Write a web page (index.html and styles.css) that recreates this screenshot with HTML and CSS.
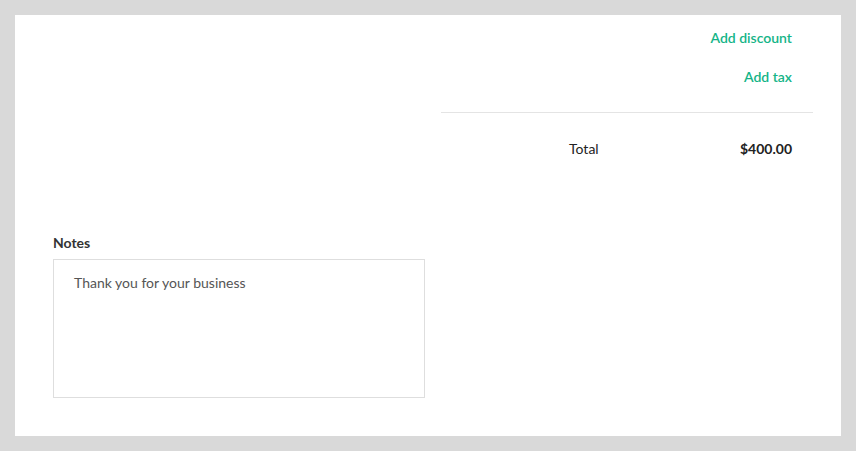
FILE: index.html
```html
<!DOCTYPE html>
<html>
<head>
<meta charset="utf-8">
<link rel="stylesheet" href="styles.css">
</head>
<body>
<div class="card">
  <div class="summary-row">
    <div class="summary">
      <a class="link first" href="#">Add discount</a>
      <a class="link second" href="#">Add tax</a>
      <div class="divider"></div>
      <div class="total-row">
        <span class="total-label">Total</span>
        <span class="total-value">$400.00</span>
      </div>
    </div>
  </div>
  <div class="notes">
    <label class="notes-label" for="notes">Notes</label>
    <textarea id="notes" class="notes-box">Thank you for your business</textarea>
  </div>
</div>
</body>
</html>
```
FILE: styles.css
```css
html, body {
  margin: 0;
  padding: 0;
}
body {
  background: #d9d9d9;
  font-family: "Lato", "Liberation Sans", sans-serif;
  font-size: 14px;
  color: #222;
}
.card {
  background: #fff;
  margin: 15px;
  height: 421px;
  box-sizing: border-box;
  padding: 0 28px 0 38px;
}
.summary-row {
  display: flex;
  justify-content: flex-end;
}
.summary {
  width: 372px;
  display: flex;
  flex-direction: column;
}
.link {
  display: block;
  text-align: right;
  padding-right: 21px;
  line-height: 18px;
  color: #14b487;
  font-weight: 600;
  text-decoration: none;
}
.link.first { margin-top: 14px; }
.link.second { margin-top: 21px; }
.divider {
  margin-top: 26px;
  border-top: 1px solid #e4e4e4;
}
.total-row {
  margin-top: 27px;
  line-height: 18px;
  display: flex;
  justify-content: space-between;
  padding-left: 128px;
  padding-right: 21px;
}
.total-value {
  font-weight: 700;
}
.notes {
  margin-top: 76px;
  width: 372px;
  display: flex;
  flex-direction: column;
}
.notes-label {
  line-height: 18px;
  font-weight: 700;
  color: #333;
}
.notes-box {
  margin-top: 7px;
  height: 139px;
  box-sizing: border-box;
  border: 1px solid #dedede;
  padding: 14px 20px 12px;
  font-family: inherit;
  font-size: 14px;
  line-height: 18px;
  color: #555;
  resize: none;
  outline: none;
}
```
